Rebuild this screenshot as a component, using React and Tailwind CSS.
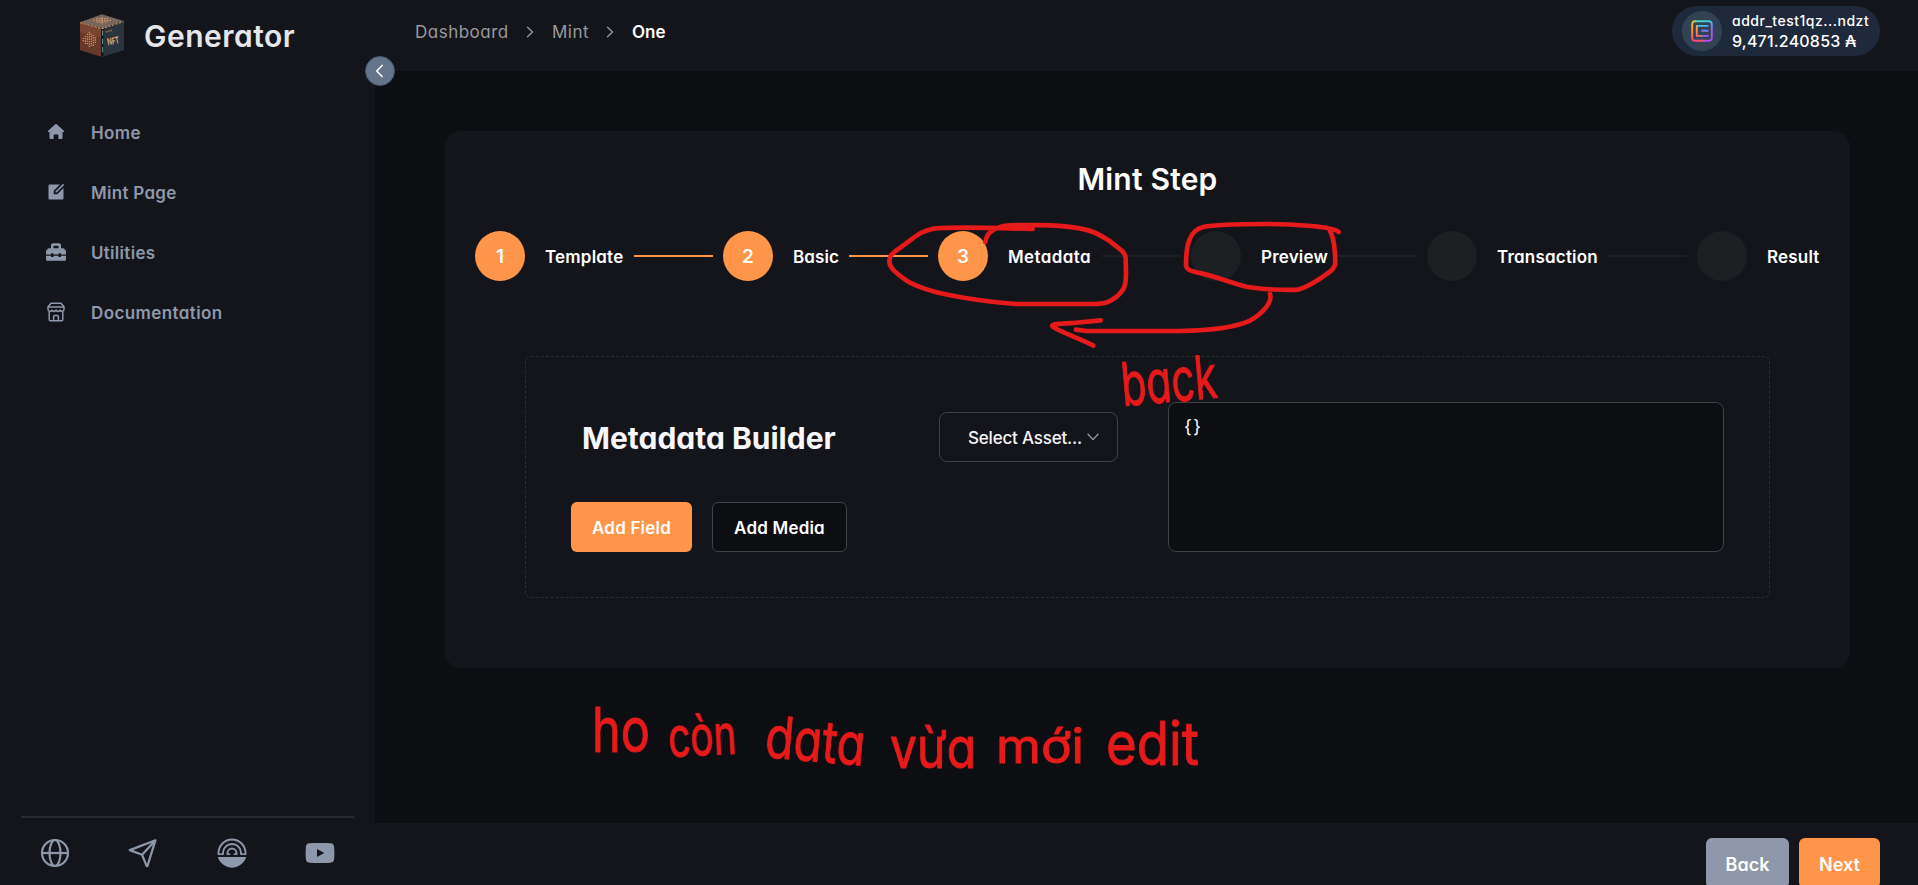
import { FaToolbox } from "react-icons/fa";
import { RiEditBoxFill } from "react-icons/ri";

const FONT = "font-['Inter','Noto_Sans',sans-serif] [font-feature-settings:'cv11']";

function CubeLogo() {
  return (
    <svg className="h-11 w-11 shrink-0 overflow-visible" viewBox="240 43 132 132">
      <polygon points="306,44 371,64 308,86 240,68" fill="#75675d" />
      <polygon points="240,68 307,88 307,172 240,152" fill="#65382a" />
      <polygon points="240,68 307,88 307,116 240,98" fill="#875038" opacity=".55" />
      <polygon points="307,88 372,65 372,151 307,172" fill="#29343c" />
      <path d="M241 69L306 87L371 66" fill="none" stroke="#d6a170" strokeWidth="3" strokeDasharray="7 4" />
      <path d="M307 88V170" stroke="#0b1115" strokeWidth="7" />
      <path d="M308 92V166" stroke="#6ba0aa" strokeWidth="3" strokeDasharray="16 9" />
      <path d="M280 62h54M288 57h38M290 67h34M306 52v20" stroke="#e99560" strokeWidth="3" strokeDasharray="5 3" />
      <path d="M268 96v48M262 102v34M274 102v38M256 108v26M280 106v34M286 112v22M250 114v14" stroke="#ef9347" strokeWidth="3.500" strokeDasharray="4 3" />
      <path d="M318 97l18-5" stroke="#a86f55" strokeWidth="5" strokeDasharray="4 3" />
      <text x="324" y="137" fill="#e2a777" fontSize="28" fontWeight="700" textLength="36" lengthAdjust="spacingAndGlyphs" transform="rotate(-12 324 137)">NFT</text>
    </svg>
  );
}

const HomeIcon = () => (
  <svg className="h-5 w-5" viewBox="0 0 20 20" fill="currentColor">
    <path d="M9.3 2.300a1 1 0 0 1 1.400 0l7.200 6.500c.5.5.2 1.200-.4 1.200h-1v5.900a1 1 0 0 1-1 1h-3.100v-3.800a.6.6 0 0 0-.6-.6H8.200a.6.6 0 0 0-.6.6v3.800H4.500a1 1 0 0 1-1-1V10h-1c-.6 0-.9-.7-.4-1.200z" />
  </svg>
);

const StoreIcon = () => (
  <svg className="h-5 w-5" viewBox="0 0 20 20" fill="none" stroke="currentColor" strokeWidth="1.500" strokeLinejoin="round" strokeLinecap="round">
    <path d="M5 1.200h10l3 3.600v2.600c0 2.200-3.200 2.500-4 .7-.7 1.700-3.300 1.700-4 0-.7 1.700-3.300 1.700-4 0-.8 1.800-4 1.500-4-.7V4.800zM2 4.900h16M3.200 9.500v8.200c0 .6.4 1 1 1h11.600c.6 0 1-.4 1-1V9.500M7.600 18.500v-4c0-.6.4-1 1-1h2.800c.6 0 1 .4 1 1v4" />
  </svg>
);

const GlobeIcon = () => (
  <svg className="h-[30px] w-[30px]" viewBox="0 0 30 30" fill="none" stroke="currentColor" strokeWidth="2.200">
    <circle cx="15" cy="15" r="13" />
    <ellipse cx="15" cy="15" rx="5.500" ry="13" />
    <path d="M2 15h26" />
  </svg>
);

const PlaneIcon = () => (
  <svg className="h-[30px] w-[30px]" viewBox="0 0 30 30" fill="none" stroke="currentColor" strokeWidth="2.200" strokeLinejoin="round">
    <path d="M27.500 2.200L1.800 12.100l12.300 4.700 4.600 11.400h.7zM27.300 2.400L14.100 16.800" />
  </svg>
);

const ArcIcon = () => (
  <svg className="h-[30px] w-[30px]" viewBox="0 0 30 30">
    <path d="M.8 19h28.400a14.500 14.500 0 0 1-7.200 8.700 14.500 14.500 0 0 1-14 0A14.500 14.500 0 0 1 .8 19z" fill="currentColor" />
    <path d="M1.500 16.700v-1.700a13.500 13.500 0 0 1 27 0v1.700M6 16.700V15a9 9 0 0 1 18 0v1.700M10.500 16.700V15a4.500 4.500 0 0 1 9 0v1.700" fill="none" stroke="currentColor" strokeWidth="1.900" />
    <path d="M1 16.300h4.800M10.200 16.300h3.100M16.700 16.300h3.100M24.200 16.300H29" stroke="currentColor" strokeWidth="1.500" />
  </svg>
);

const VideoIcon = () => (
  <svg className="h-[30px] w-[30px]" viewBox="0 0 30 30" fill="currentColor">
    <path fillRule="evenodd" d="M4.500 5.300C11 4.800 19 4.800 25.500 5.300 28.200 5.500 29 6.800 29.200 9.500c.3 3.700.3 7.300 0 11-.2 2.700-1 4-3.700 4.200-6.500.5-14.500.5-21 0C1.800 24.500 1 23.200.8 20.500c-.3-3.700-.3-7.300 0-11C1 6.800 1.800 5.500 4.500 5.300zM12 11v8l7.300-4z" />
  </svg>
);

const WalletIcon = () => (
  <svg className="h-[22px] w-[22px]" viewBox="0 0 22 22" fill="none" stroke="url(#walletHue)" strokeWidth="1.900" strokeLinejoin="round">
    <defs>
      <linearGradient id="walletHue" gradientUnits="userSpaceOnUse" x1="6" y1="0" x2="16" y2="22">
        <stop offset="0" stopColor="#4fdcb0" />
        <stop offset=".3" stopColor="#3fc3ee" />
        <stop offset=".6" stopColor="#8b6cf5" />
        <stop offset="1" stopColor="#b44cf0" />
      </linearGradient>
      <linearGradient id="walletWarm" gradientUnits="userSpaceOnUse" x1="0" y1="0" x2="0" y2="22">
        <stop offset="0" stopColor="#c8d94a" />
        <stop offset=".4" stopColor="#fb9a45" />
        <stop offset="1" stopColor="#f8477c" />
      </linearGradient>
    </defs>
    <path d="M4 1.200h14a2.800 2.800 0 0 1 2.800 2.800v14a2.800 2.800 0 0 1-2.800 2.800h-7" />
    <path d="M4.500 1.200H4A2.800 2.800 0 0 0 1.200 4v14A2.800 2.800 0 0 0 4 20.800h8" stroke="url(#walletWarm)" />
    <path d="M6 5.900h11.500M10.500 10.800h7M10 15.900h7.500" />
    <path d="M6.500 5.900h-.7v10H11" stroke="url(#walletWarm)" />
  </svg>
);

const Chevron = ({ d, className }) => (
  <svg className={className} viewBox="0 0 12 12" fill="none" stroke="currentColor" strokeWidth="1.300" strokeLinecap="round" strokeLinejoin="round">
    <path d={d} />
  </svg>
);

const navItems = [
  { label: "Home", icon: <HomeIcon />, track: "tracking-[0.4px]" },
  { label: "Mint Page", icon: <RiEditBoxFill className="h-5 w-5" />, track: "tracking-[0.3px]" },
  { label: "Utilities", icon: <FaToolbox className="h-5 w-5" />, track: "tracking-[0.3px]" },
  { label: "Documentation", icon: <StoreIcon />, track: "tracking-[0.4px]" },
];

const steps = [
  { label: "Template", done: true, w: "w-[79px]", track: "tracking-[0.2px]" },
  { label: "Basic", done: true, w: "w-[46px]", track: "tracking-[0.1px]" },
  { label: "Metadata", done: true, w: "w-[84px]", track: "tracking-[0.4px]" },
  { label: "Preview", w: "w-[67px]", track: "tracking-[0.2px]" },
  { label: "Transaction", w: "w-[101px]", track: "tracking-[0.2px]" },
  { label: "Result", w: "w-[52px]", track: "tracking-[0.2px]" },
];

function Sidebar() {
  return (
    <aside className="relative flex w-[375px] shrink-0 flex-col bg-[#14151a]">
      <div className="flex h-[72px] items-center gap-5 pl-20">
        <CubeLogo />
        <span className="text-[30px] leading-9 font-semibold tracking-[0.5px] text-[#e5e6ea]">Generator</span>
      </div>
      <nav className="mt-[30px] flex flex-col">
        {navItems.map((n) => (
          <a key={n.label} className="flex h-[60px] items-center gap-[25px] pl-[46px] text-[#8e98ab]">
            {n.icon}
            <span className={"pt-px text-[17px] leading-6 font-semibold " + n.track}>{n.label}</span>
          </a>
        ))}
      </nav>
      <div className="mt-auto mr-[21px] ml-[21px] flex h-[69px] justify-between border-t-2 border-[#292b31] px-[19px] pt-5 text-[#8e98ab]">
        <GlobeIcon />
        <PlaneIcon />
        <ArcIcon />
        <VideoIcon />
      </div>
      <button className="absolute top-14 left-[365px] z-10 flex h-[30px] w-[30px] items-center justify-center rounded-full border border-[#475569] bg-[#64748b] text-white">
        <Chevron className="h-3.5 w-3.5" d="M7.800 1.200L3.200 6l4.600 4.800" />
      </button>
    </aside>
  );
}

function Header() {
  return (
    <header className="flex h-[71px] shrink-0 justify-between bg-[#14151a] pr-[38px] pl-10">
      <div className="flex h-16 items-center text-[17px] leading-6 text-[#9a9a9d]">
        <span className="w-[93px] tracking-[0.5px] whitespace-nowrap">Dashboard</span>
        <Chevron className="mx-4 h-3 w-3" d="M3.500 1.200L8.500 6 3.500 10.800" />
        <span className="w-9 tracking-[0.5px]">Mint</span>
        <Chevron className="mx-4 h-3 w-3" d="M3.500 1.200L8.500 6 3.500 10.800" />
        <span className="font-semibold text-white">One</span>
      </div>
      <div className="mt-1.5 flex h-[50px] w-[208px] items-center gap-2.5 rounded-full bg-[#1e293b] pl-2.5 whitespace-nowrap text-white">
        <div className="flex h-10 w-10 shrink-0 items-center justify-center rounded-full bg-[#334155]">
          <WalletIcon />
        </div>
        <div className="flex flex-col font-medium">
          <span className="text-[14px] leading-[21px] tracking-[0.5px]">addr_test1qz...ndzt</span>
          <span className="text-[16px] leading-[21px] tracking-[0.2px]">9,471.240853 ₳</span>
        </div>
      </div>
    </header>
  );
}

function Stepper() {
  return (
    <div className="mt-[30px] flex h-[50px] items-center">
      {steps.map((s, i) => (
        <div key={s.label} className="flex items-center">
          <div className={"flex h-[50px] w-[50px] shrink-0 items-center justify-center rounded-full pt-0.5 text-[19px] font-semibold text-white " + (s.done ? "bg-[#ff9548]" : "bg-[#1d2023]")}>
            {s.done ? i + 1 : ""}
          </div>
          <span className={"ml-5 shrink-0 pt-0.5 text-[17px] leading-6 font-semibold whitespace-nowrap text-white " + s.w + " " + s.track}>{s.label}</span>
          {i < 5 && <div className={"mx-2.5 h-0.5 w-[79px] shrink-0 " + (i < 2 ? "bg-[#ff9548]" : "bg-[#1d2023]")} />}
        </div>
      ))}
    </div>
  );
}

function Builder() {
  return (
    <div className="mt-[75px] ml-[50px] flex h-[242px] w-[1245px] rounded-md border border-dashed border-[#2d2f34] pt-[45px] pl-[45px]">
      <div className="w-[547px]">
        <div className="mt-2.5 flex h-[50px] items-center justify-between pl-[11px]">
          <h2 className="pt-0.5 text-[30px] leading-9 font-bold whitespace-nowrap text-[#f8f8fa]">Metadata Builder</h2>
          <div className="flex h-[50px] w-[179px] items-center rounded-lg border border-[#404247] pl-7 text-[#f4f4f6]">
            <span className="w-[115px] pt-1 text-[17px] font-medium tracking-[-0.2px] whitespace-nowrap">Select Asset...</span>
            <Chevron className="ml-1 h-3 w-3 text-[#9a9a9d]" d="M1 3.200L6 8.600 11 3.200" />
          </div>
        </div>
        <div className="mt-10 flex gap-5 text-[17px] font-semibold tracking-[0.2px] whitespace-nowrap text-white">
          <button className="h-[50px] w-[121px] rounded-md bg-[#ff9548] pt-1">Add Field</button>
          <button className="h-[50px] w-[135px] rounded-md border border-[#404247] bg-[#0d0e12] pt-1">Add Media</button>
        </div>
      </div>
      <div className="ml-[50px] h-[150px] w-[556px] rounded-lg border border-[#404247] bg-[#0d0e12] px-[15px] py-[11px] text-[18px] leading-[26px] tracking-[1.500px] text-white">
        {"{}"}
      </div>
    </div>
  );
}

const words = [
  { t: "ho", x: 592, y: 752, w: 58, s: 62, r: 0 },
  { t: "còn", x: 669, y: 757, w: 68, s: 55, r: -3 },
  { t: "data", x: 764, y: 757, w: 100, s: 58, r: 5 },
  { t: "vừa", x: 890, y: 768, w: 86, s: 56, r: 0 },
  { t: "mới", x: 996, y: 763, w: 88, s: 48, r: 0 },
  { t: "edit", x: 1106, y: 765, w: 93, s: 60, r: 0 },
  { t: "back", x: 1123, y: 406, w: 96, s: 60, r: -5 },
];

function PenMarks() {
  return (
    <svg className="pointer-events-none absolute inset-0 z-20 h-[885px] w-[1918px]" viewBox="0 0 1918 885">
      <g transform="translate(860 120) scale(.33333)" fill="none" stroke="#e61a1a" strokeWidth="14" strokeLinecap="round" strokeLinejoin="round">
        <path d="M376 366C380 340 395 328 430 318C480 312 600 316 640 322C700 330 720 345 750 364C780 388 796 396 797 415L798 460C798 500 792 510 770 530C748 548 735 551 700 552H470C330 542 200 518 140 482C100 454 88 440 88 424C88 402 105 395 130 376C170 348 180 334 220 326C260 320 420 324 518 327" />
        <path d="M1436 336C1420 318 1280 312 1220 312C1120 312 1060 314 1030 321C990 330 978 370 978 436C980 452 995 452 1010 457C1060 466 1110 488 1160 500C1200 508 1290 512 1318 508C1350 498 1390 470 1410 455C1430 438 1426 430 1425 400C1422 360 1418 345 1410 332" />
        <path d="M1230 522C1238 545 1210 580 1170 602C1120 626 1020 632 960 633H680L648 629" />
        <path d="M722 601L640 609C600 611 570 612 578 620C600 636 660 656 700 677" />
      </g>
      <g fill="#e61a1a" stroke="#e61a1a" strokeWidth="1" strokeLinejoin="round">
        {words.map((w) => (
          <text key={w.t} x={w.x} y={w.y} fontSize={w.s} textLength={w.w} lengthAdjust="spacingAndGlyphs" transform={`rotate(${w.r} ${w.x} ${w.y})`}>{w.t}</text>
        ))}
      </g>
    </svg>
  );
}

export default function App() {
  return (
    <div className={"relative flex h-[885px] w-[1918px] overflow-hidden bg-[#0d0e12] " + FONT}>
      <Sidebar />
      <div className="flex flex-1 flex-col">
        <Header />
        <main className="flex-1 pt-[60px] pl-[70px]">
          <section className="h-[537px] w-[1405px] rounded-2xl bg-[#14151a] px-[30px] pt-7">
            <h1 className="mb-8 text-center text-[30px] leading-10 font-semibold tracking-[0.2px] text-white">Mint Step</h1>
            <Stepper />
            <Builder />
          </section>
        </main>
        <footer className="flex h-[62px] shrink-0 justify-end gap-2.5 bg-[#14151a] pt-[15px] pr-[38px] text-[18px] font-semibold text-white">
          <button className="h-[50px] w-[83px] shrink-0 rounded-md bg-[#8f98aa] pt-0.5">Back</button>
          <button className="h-[50px] w-[81px] shrink-0 rounded-md bg-[#ff9548] pt-0.5">Next</button>
        </footer>
      </div>
      <PenMarks />
    </div>
  );
}
